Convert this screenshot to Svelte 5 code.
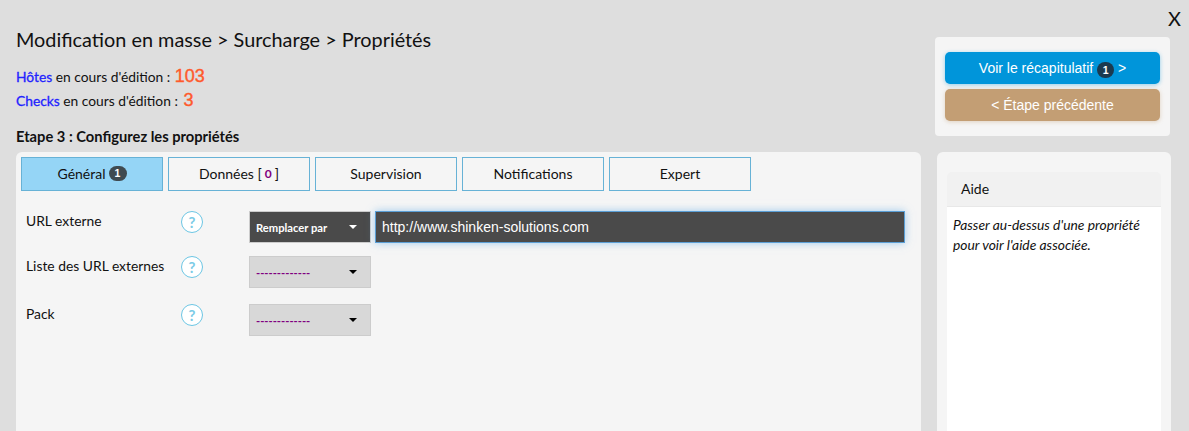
<script>
  const tabs = [
    { label: "Général", active: true, badge: "1" },
    { label: "Données", count: "0" },
    { label: "Supervision" },
    { label: "Notifications" },
    { label: "Expert" }
  ];

  const rows = [
    { label: "URL externe", mode: "Remplacer par", value: "http://www.shinken-solutions.com" },
    { label: "Liste des URL externes", mode: "-------------" },
    { label: "Pack", mode: "-------------" }
  ];
</script>

<div class="page">
  <button class="close">X</button>

  <div class="main">
    <h1>Modification en masse &gt; Surcharge &gt; Propriétés</h1>
    <p class="count first"><span class="kind">Hôtes</span> en cours d'édition : <span class="num big">103</span></p>
    <p class="count"><span class="kind">Checks</span> en cours d'édition : <span class="num">3</span></p>
    <h2>Etape 3 : Configurez les propriétés</h2>

    <div class="panel">
      <div class="tabs">
        {#each tabs as tab}
          <div class="tab" class:active={tab.active}>
            {tab.label}
            {#if tab.badge}<span class="badge">{tab.badge}</span>{/if}
            {#if tab.count}[ <span class="zero">{tab.count}</span> ]{/if}
          </div>
        {/each}
      </div>

      <div class="rows">
        {#each rows as row}
          <div class="row">
            <div class="label">{row.label}</div>
            <div class="help">?</div>
            <div class="select" class:on={row.value}>
              <span class="mode">{row.mode}</span>
              <span class="caret"></span>
            </div>
            {#if row.value}
              <div class="input">{row.value}</div>
            {/if}
          </div>
        {/each}
      </div>
    </div>
  </div>

  <div class="side">
    <div class="actions">
      <div class="btn blue">Voir le récapitulatif <span class="badge dark">1</span> &gt;</div>
      <div class="btn tan">&lt; Étape précédente</div>
    </div>
    <div class="aide">
      <div class="aide-head">Aide</div>
      <div class="aide-body">Passer au-dessus d'une propriété pour voir l'aide associée.</div>
    </div>
  </div>
</div>

<style>
  :global(body) {
    background: #dedede;
    overflow: hidden;
  }

  .page {
    position: relative;
    display: flex;
    height: 431px;
    overflow: hidden;
    font-family: Lato, sans-serif;
    color: #111;
    box-sizing: border-box;
    padding-left: 16px;
  }

  .close {
    position: absolute;
    top: 6px;
    left: 1168px;
    padding: 0;
    border: 0;
    background: none;
    font: 20px/24px Lato, sans-serif;
    color: #111;
  }

  .main {
    width: 905px;
    flex: none;
  }

  h1 {
    margin: 27px 0 0;
    font-size: 19.85px;
    line-height: 24px;
    font-weight: 400;
  }

  .count {
    margin: 0;
    height: 24px;
    font-size: 13.8px;
    line-height: 24px;
  }

  .count.first {
    margin-top: 13px;
  }

  .kind {
    color: #2222ff;
    -webkit-text-stroke: 0.3px #2222ff;
  }

  .num {
    margin-left: 2px;
    font-family: "Liberation Sans", sans-serif;
    font-size: 18px;
    color: #ff5a2d;
    -webkit-text-stroke: 0.4px #ff5a2d;
  }

  .num.big {
    margin-left: 1px;
  }

  h2 {
    margin: 14px 0 0;
    font-size: 14.7px;
    line-height: 20px;
    font-weight: 700;
  }

  .panel {
    margin-top: 6px;
    height: 290px;
    padding: 5px;
    background: #f5f5f5;
    border-radius: 6px 6px 0 0;
    box-sizing: border-box;
  }

  .tabs {
    display: flex;
    gap: 5px;
  }

  .tab {
    width: 142px;
    height: 34px;
    padding-bottom: 1px;
    box-sizing: border-box;
    display: flex;
    align-items: center;
    justify-content: center;
    gap: 3px;
    border: 1px solid #67b2d6;
    font-size: 14px;
  }

  .tab.active {
    background: #95d5f6;
  }

  .zero {
    color: #800080;
    font-size: 12px;
    font-weight: 700;
  }

  .badge {
    display: inline-block;
    min-width: 18px;
    height: 15px;
    border-radius: 8px;
    background: #3f4a50;
    color: #fff;
    font-family: "Liberation Sans", sans-serif;
    font-size: 10.5px;
    font-weight: 700;
    line-height: 15px;
    text-align: center;
  }

  .badge.dark {
    min-width: 17px;
    height: 16px;
    line-height: 16px;
    background: #1b3a4f;
    vertical-align: -1px;
  }

  .rows {
    padding-top: 20px;
  }

  .row {
    display: flex;
    align-items: flex-start;
    margin-bottom: 13px;
  }

  .row + .row + .row {
    margin-top: 16px;
  }

  .label {
    width: 155px;
    padding-left: 5px;
    font-size: 13.85px;
    line-height: 20px;
  }

  .help {
    width: 22px;
    height: 22px;
    box-sizing: border-box;
    border: 1px solid #6cc6e4;
    border-radius: 50%;
    background: #fff;
    color: #7ccbe6;
    font-size: 15px;
    font-weight: 700;
    line-height: 20px;
    text-align: center;
  }

  .select {
    width: 122px;
    height: 32px;
    margin-left: 46px;
    padding: 0 13px 0 6px;
    box-sizing: border-box;
    display: flex;
    align-items: center;
    justify-content: space-between;
    background: #d8d8d8;
    border: 1px solid #cccccc;
    font-size: 11.2px;
    font-weight: 700;
    color: #800080;
  }

  .select.on {
    background: #4a4a4a;
    color: #fff;
  }

  .caret {
    width: 0;
    height: 0;
    border-left: 4px solid transparent;
    border-right: 4px solid transparent;
    border-top: 4px solid #000;
  }

  .select.on .caret {
    border-top-color: #fff;
  }

  .input {
    width: 530px;
    height: 32px;
    margin-left: 4px;
    padding-left: 6px;
    box-sizing: border-box;
    background: #4a4a4a;
    border: 1px solid #5b9fd6;
    box-shadow: 0 0 8px rgba(102, 175, 233, 0.6);
    color: #fff;
    font-family: "Liberation Sans", sans-serif;
    font-size: 14px;
    line-height: 30px;
  }

  .side {
    margin-left: 14px;
    width: 236px;
    flex: none;
    padding-top: 37px;
  }

  .actions {
    width: 235px;
    height: 99px;
    padding: 15px 10px;
    box-sizing: border-box;
    background: #f5f5f5;
    border-radius: 4px;
    display: flex;
    flex-direction: column;
    gap: 5px;
  }

  .btn {
    height: 32px;
    border-radius: 5px;
    color: #fff;
    font-family: "Liberation Sans", sans-serif;
    font-size: 14px;
    line-height: 32px;
    text-align: center;
  }

  .blue {
    background: #0095da;
    box-shadow: 0 1px 4px rgba(0, 149, 218, 0.4);
  }

  .tan {
    background: #c39e74;
    box-shadow: 0 1px 4px rgba(195, 158, 116, 0.4);
  }

  .aide {
    margin: 16px 0 0 2px;
    width: 234px;
    height: 290px;
    padding: 20px 10px 0;
    box-sizing: border-box;
    background: #f5f5f5;
    border-radius: 6px 6px 0 0;
    display: flex;
    flex-direction: column;
  }

  .aide-head {
    height: 35px;
    padding-left: 14px;
    box-sizing: border-box;
    background: #f1f1f1;
    border-bottom: 1px solid #e8e8e8;
    border-radius: 5px 5px 0 0;
    font-size: 14px;
    line-height: 34px;
  }

  .aide-body {
    flex: 1;
    padding: 8px 6px;
    background: #fff;
    font-size: 13.85px;
    font-style: italic;
    line-height: 20px;
  }
</style>
